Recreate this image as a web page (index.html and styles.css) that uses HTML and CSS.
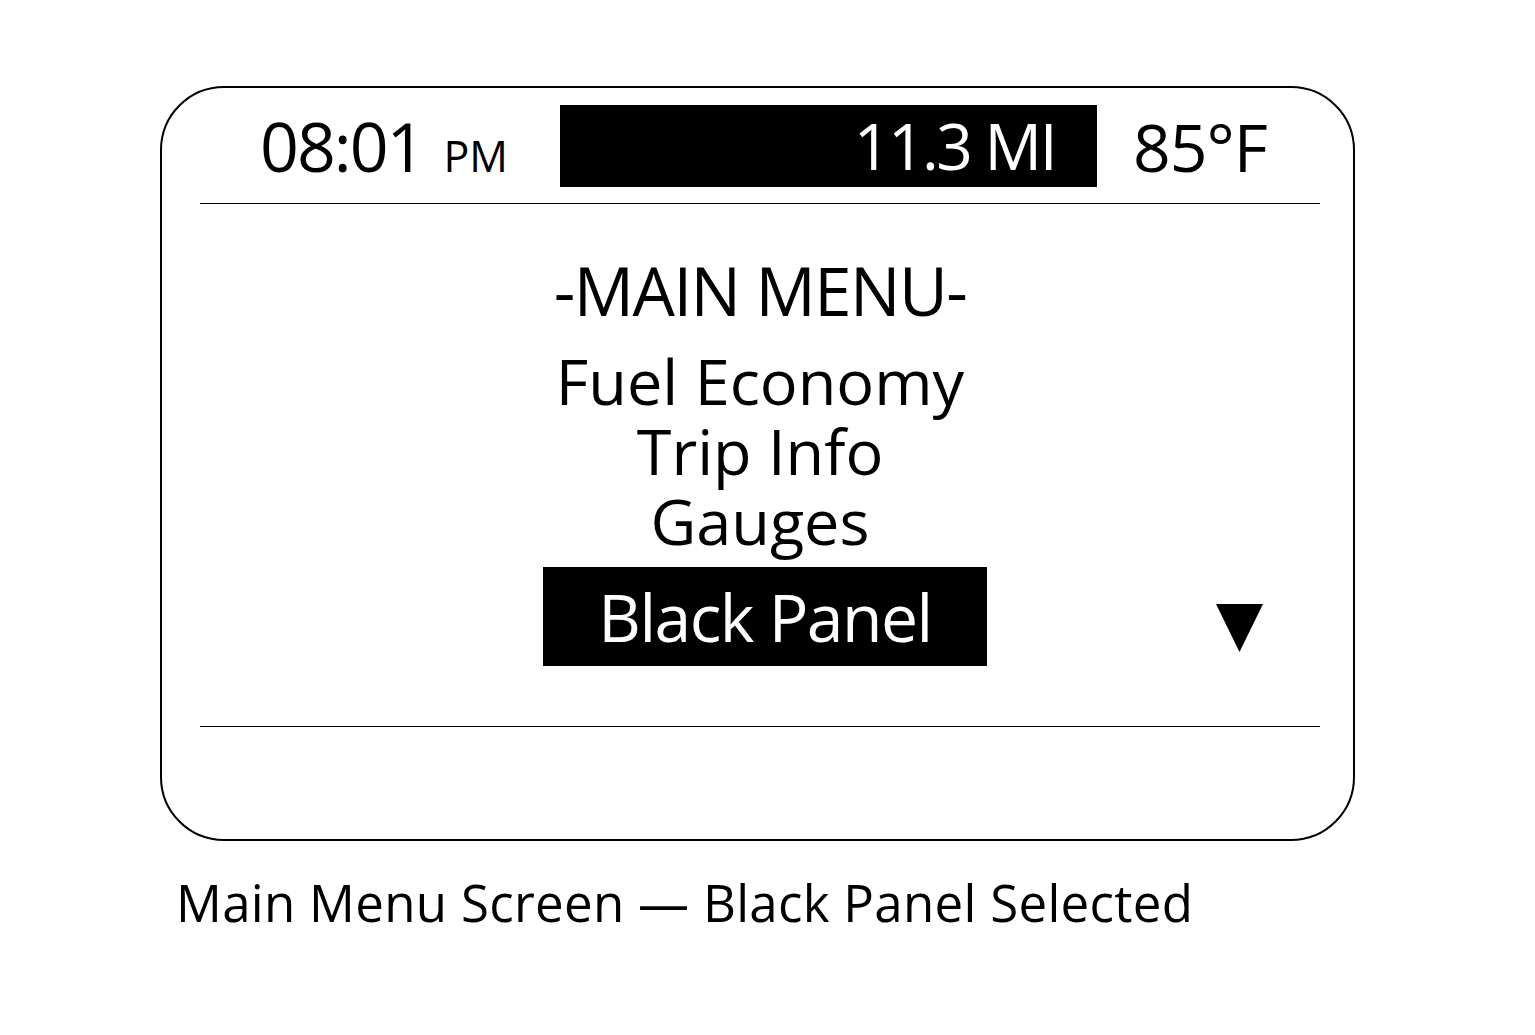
FILE: index.html
```html
<!DOCTYPE html>
<html>
<head>
<meta charset="utf-8">
<link rel="stylesheet" href="styles.css">
</head>
<body>
<div class="page">
  <div class="screen">
    <div class="header">
      <div class="time"><span class="clock">08:01</span><span class="ampm">PM</span></div>
      <div class="range">11.3 MI</div>
      <div class="temp">85°F</div>
    </div>
    <div class="menu">
      <div class="title">-MAIN MENU-</div>
      <div class="item first">Fuel Economy</div>
      <div class="item">Trip Info</div>
      <div class="item">Gauges</div>
      <div class="selrow">
        <div></div>
        <div class="selected">Black Panel</div>
        <svg class="arrow" width="47" height="48" viewBox="0 0 47 48"><polygon points="0,0 47,0 23.5,48" fill="#000"/></svg>
      </div>
    </div>
    <div class="footer"></div>
  </div>
  <div class="caption">Main Menu Screen — Black Panel Selected</div>
</div>
</body>
</html>
```
FILE: styles.css
```css
html, body {
  margin: 0;
  background: #fff;
}
body {
  font-family: "Open Sans", "Noto Sans", sans-serif;
  color: #000;
}
.page {
  padding: 86px 0 0 160px;
}
.screen {
  width: 1195px;
  height: 755px;
  box-sizing: border-box;
  border: 2px solid #000;
  border-radius: 64px;
  padding: 0 33px 0 38px;
  display: flex;
  flex-direction: column;
}
.header {
  height: 115px;
  border-bottom: 1px solid #000;
  display: flex;
  align-items: center;
  padding-left: 60px;
}
.time {
  width: 300px;
  display: flex;
  align-items: baseline;
  white-space: nowrap;
}
.clock {
  font-size: 68px;
  letter-spacing: -2px;
}
.ampm {
  font-size: 43px;
  margin-left: 20px;
}
.range {
  width: 537px;
  height: 82px;
  box-sizing: border-box;
  background: #000;
  color: #fff;
  font-size: 64px;
  line-height: 82px;
  text-align: right;
  padding-right: 42px;
  letter-spacing: -2.5px;
}
.temp {
  margin-left: 36px;
  font-size: 66px;
  letter-spacing: -1px;
}
.menu {
  height: 523px;
  border-bottom: 1px solid #000;
  display: flex;
  flex-direction: column;
  align-items: center;
  padding-top: 46px;
  box-sizing: border-box;
}
.title {
  font-size: 67px;
  line-height: 80px;
  letter-spacing: -1.5px;
}
.item {
  font-size: 63px;
  line-height: 70px;
}
.item.first {
  margin-top: 16px;
}
.selrow {
  align-self: stretch;
  display: grid;
  grid-template-columns: 1fr auto 1fr;
  align-items: center;
  margin-top: 11px;
}
.selected {
  background: #000;
  color: #fff;
  width: 444px;
  height: 99px;
  box-sizing: border-box;
  font-size: 66px;
  line-height: 99px;
  letter-spacing: -1.5px;
  text-align: center;
  margin-left: 10px;
}
.arrow {
  display: block;
  justify-self: end;
  margin-right: 57px;
  margin-top: 23px;
}
.caption {
  margin-top: 26px;
  margin-left: 16px;
  font-size: 51px;
  line-height: 70px;
  letter-spacing: 0.3px;
}
```
